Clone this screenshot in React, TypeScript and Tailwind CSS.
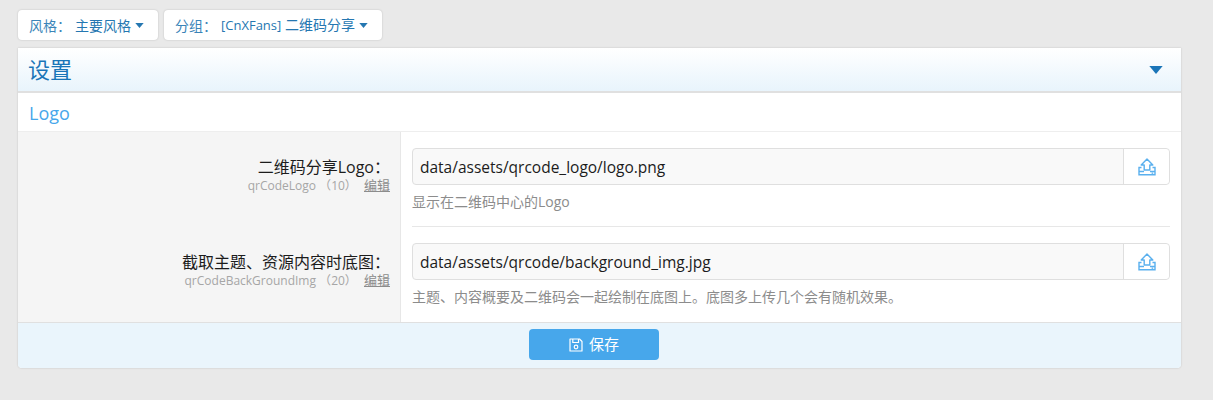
const font = { fontFamily: '"Open Sans", "Noto Sans CJK SC", sans-serif' };

const Caret = ({ className }: { className: string }) => (
  <svg viewBox="0 0 10 6" className={className} fill="currentColor">
    <path d="M0 0h10L5 6z" />
  </svg>
);

const UploadIcon = () => (
  <svg viewBox="0 0 18 18" className="w-[18px] h-[18px] text-[#5ab0ee]" fill="none" stroke="currentColor" strokeWidth="1.4">
    <path d="M9 1 L14.8 7 H11.8 V12 H6.2 V7 H3.2 Z" strokeLinejoin="round" />
    <path d="M3.5 9.5 H1 V16.8 H17 V9.5 H14.5" />
    <path d="M1 13.5 H6 M12 13.5 H17" />
    <rect x="13.6" y="14.5" width="1.6" height="1.3" fill="currentColor" stroke="none" />
  </svg>
);

const SaveIcon = () => (
  <svg viewBox="0 0 14 14" className="w-[14px] h-[14px]" fill="none" stroke="currentColor" strokeWidth="1.2">
    <path d="M1 1 H10.5 L13 3.5 V13 H1 Z" strokeLinejoin="round" />
    <path d="M3.8 1 V4.5 H9.5 V1" />
    <circle cx="7" cy="9" r="1.8" />
  </svg>
);

const Filter = ({ label, children, width }: { label: string; children: React.ReactNode; width: string }) => (
  <button className={`${width} h-[30px] flex items-center pl-[11px] bg-white rounded text-[14px] text-[#2577b1] shadow-[0_0_2px_rgba(0,0,0,0.2)]`}>
    <span className="opacity-90">{label}：</span>
    <span className="ml-1">{children}</span>
    <Caret className="w-[9px] h-[5px] ml-1" />
  </button>
);

type RowProps = {
  title: string;
  name: string;
  order: string;
  path: string;
  hint: string;
  last?: boolean;
};

const Row = ({ title, name, order, path, hint, last }: RowProps) => (
  <div className="flex">
    <div className="w-[383px] shrink-0 bg-[#f5f5f5] border-r border-[#e7e7e7] pr-[10px] pt-[25px] text-right">
      <div className="text-[16px] leading-[20px] text-[#1c1c1c]">{title}：</div>
      <div className="text-[12px] leading-[17px] text-[#a6a6a6]">
        {name} （{order}） <span className="ml-1 text-[13px] text-[#8c8c8c] underline">编辑</span>
      </div>
    </div>
    <div className="flex-1 px-[11px] pt-[16px]">
      <div className="flex h-[37px] rounded border border-[#dfdfdf] bg-[#f9f9f9]">
        <div className="flex-1 px-[7px] text-[15.5px] leading-[36px] text-[#1c1c1c]">{path}</div>
        <div className="w-[46px] flex items-center justify-center bg-white border-l border-[#dfdfdf] rounded-r">
          <UploadIcon />
        </div>
      </div>
      <div className={`mt-[8px] text-[14px] leading-[18px] text-[#8c8c8c] ${last ? 'pb-[16px]' : 'pb-[15px] border-b border-[#e7e7e7]'}`}>
        {hint}
      </div>
    </div>
  </div>
);

export default function App() {
  return (
    <div style={font} className="min-h-[400px] bg-[#e9e9e9] pt-[10px] pl-[18px] pr-[32px]">
      <div className="flex gap-[6px]">
        <Filter label="风格" width="w-[140px]">主要风格</Filter>
        <Filter label="分组" width="w-[218px]">
          <span className="text-[13px]">[CnXFans]</span> 二维码分享
        </Filter>
      </div>

      <div className="mt-[8px] bg-white rounded-b shadow-[0_0_2px_rgba(0,0,0,0.2)]">
        <div className="h-[45px] flex items-center justify-between pl-[10px] pr-[18px] bg-gradient-to-b from-white to-[#e8f4fc] border-b-2 border-[#e0e0e0]">
          <h2 className="text-[22px] text-[#1a75b8]">设置</h2>
          <Caret className="w-[14px] h-[8px] text-[#1a75b8]" />
        </div>
        <div className="h-[39px] flex items-center pl-[11px] pt-[2px] text-[18px] text-[#47a7eb] border-b border-[#eeeeee]">Logo</div>
        <Row
          title="二维码分享Logo"
          name="qrCodeLogo"
          order="10"
          path="data/assets/qrcode_logo/logo.png"
          hint="显示在二维码中心的Logo"
        />
        <Row
          title="截取主题、资源内容时底图"
          name="qrCodeBackGroundImg"
          order="20"
          path="data/assets/qrcode/background_img.jpg"
          hint="主题、内容概要及二维码会一起绘制在底图上。底图多上传几个会有随机效果。"
          last
        />
        <div className="h-[46px] flex items-start justify-center pt-[6px] pr-[11px] bg-[#eaf5fc] border-t border-[#e0e0e0] rounded-b">
          <button className="w-[130px] h-[31px] flex items-center justify-center gap-[6px] bg-[#47a7eb] rounded text-[15px] text-white">
            <SaveIcon />
            保存
          </button>
        </div>
      </div>
    </div>
  );
}
